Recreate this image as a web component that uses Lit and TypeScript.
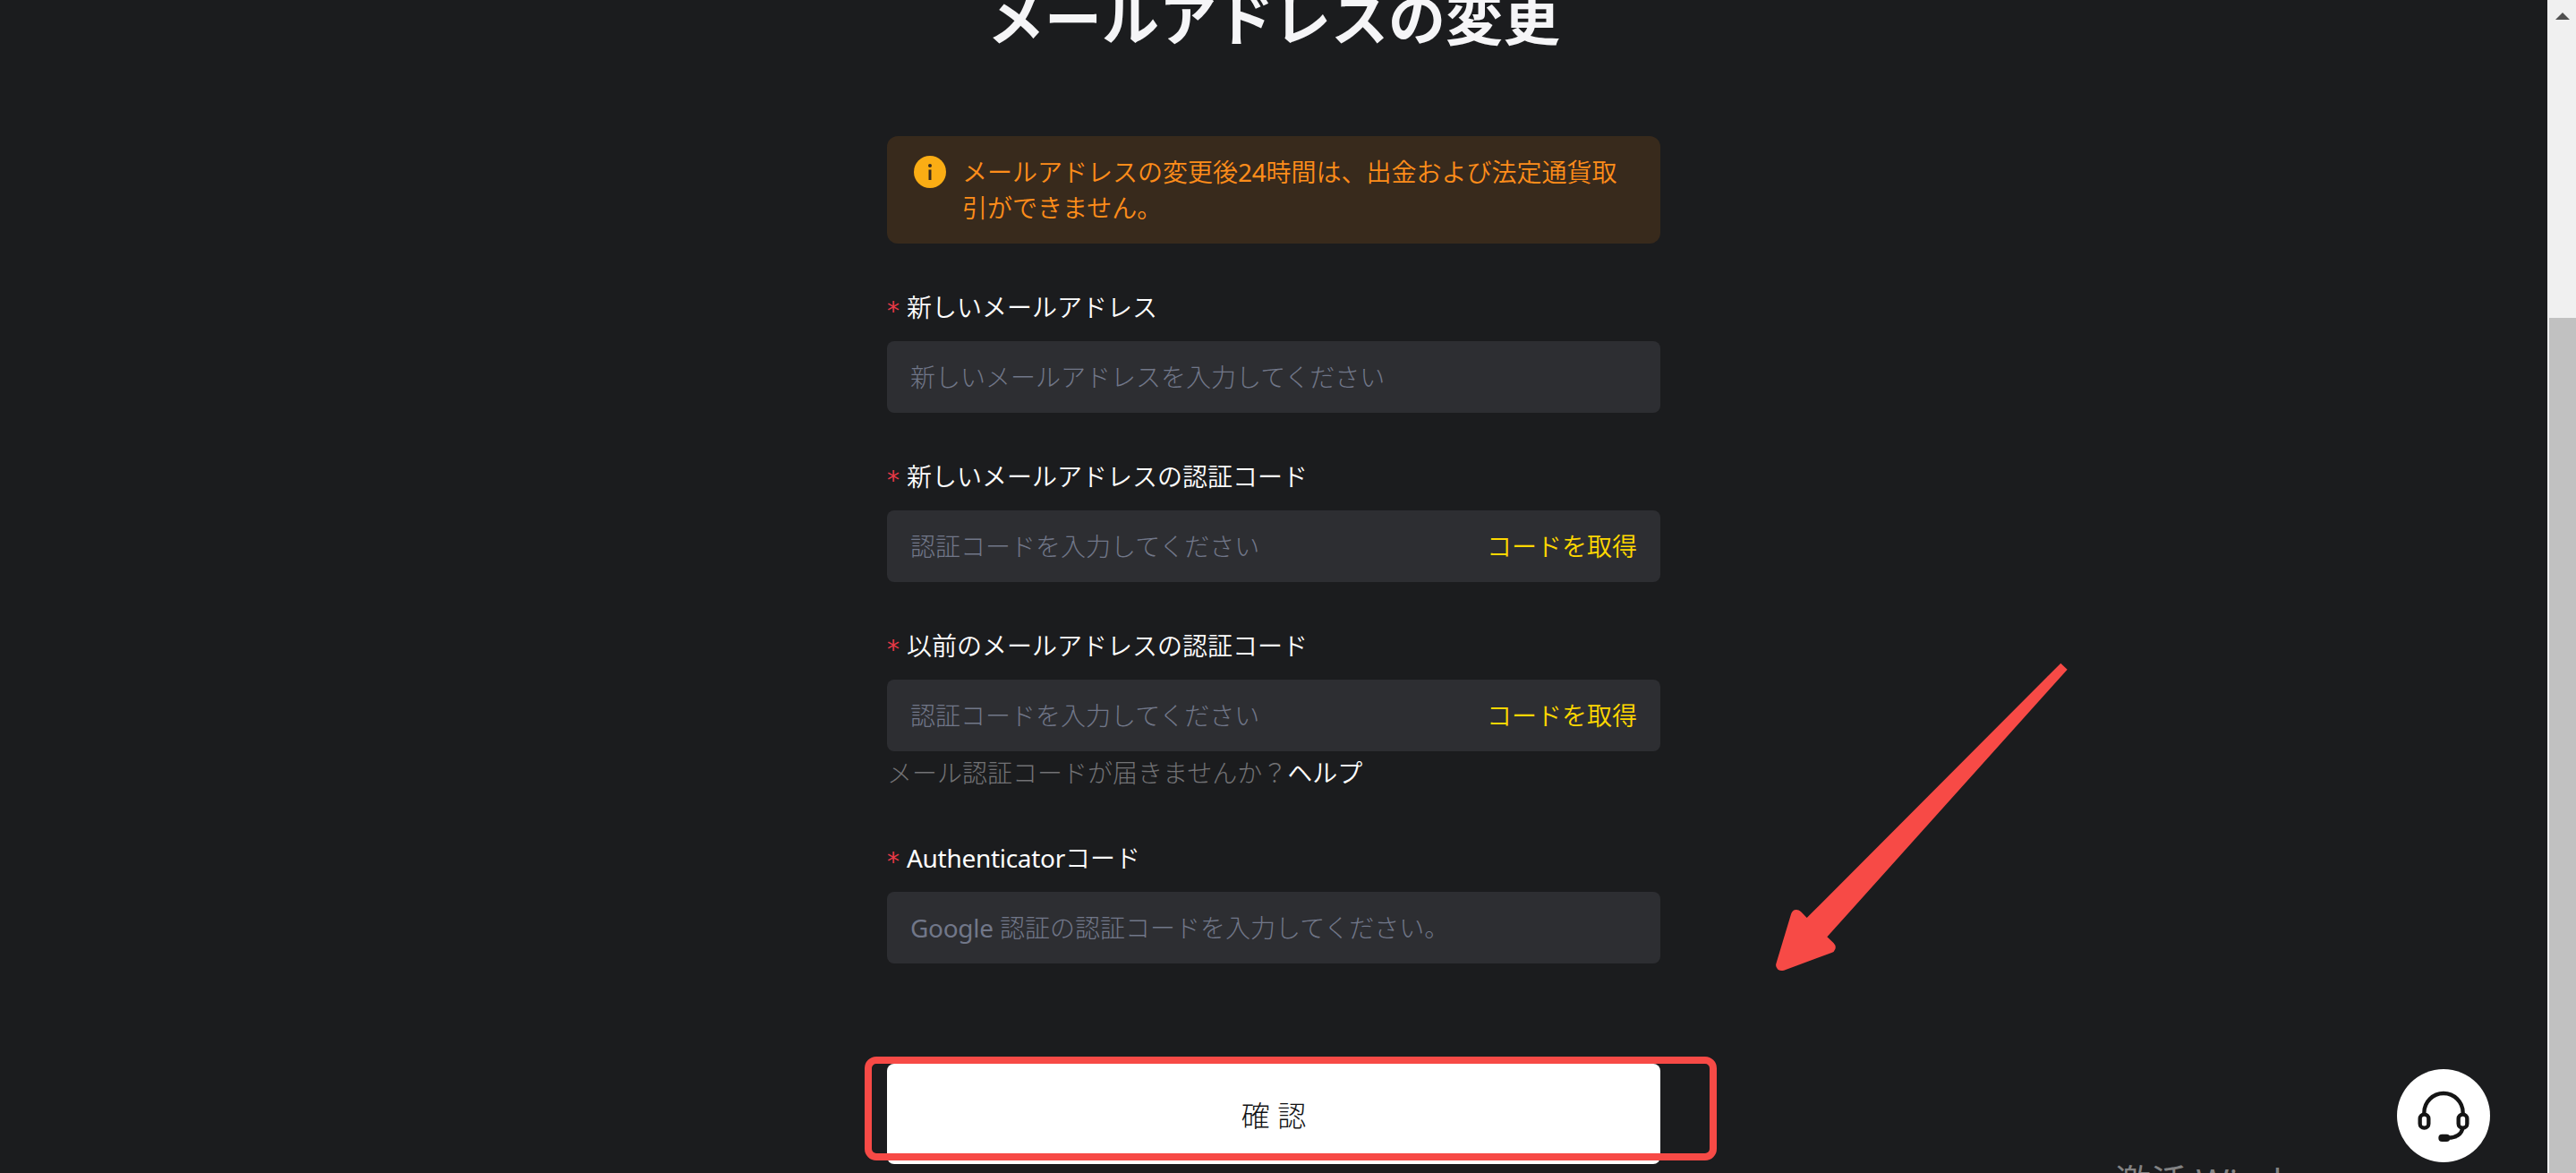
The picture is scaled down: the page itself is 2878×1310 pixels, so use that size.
import { LitElement, css, html, nothing, svg } from 'lit'
import { customElement, property } from 'lit/decorators.js'

const fonts = css`"Noto Sans", "Noto Sans CJK JP", sans-serif`

// latin words and digits are set a bit heavier than the kana around them
const mixed = (text: string) => text
  .split(/([A-Za-z0-9]+)/)
  .map((part, i) => i % 2 ? html`<span class="latin">${part}</span>` : part)

const mixedStyles = css`
  .latin {
    font-weight: 400;
    letter-spacing: -0.3px;
  }
`

@customElement('form-field')
export class FormField extends LitElement {

  @property()
  label = ''
  @property()
  placeholder = ''
  @property()
  action = ''

  render() {
    return html`
      <label class="label"><span class="star">*</span><span>${mixed(this.label)}</span></label>
      <div class="box">
        <div class="input">${mixed(this.placeholder)}</div>
        ${this.action ? html`<button class="action">${this.action}</button>` : nothing}
      </div>
      <slot></slot>
    `
  }

  static styles = [mixedStyles, css`
    :host {
      display: block;
      font-family: ${fonts};
      font-size: 28px;
      font-weight: 300;
    }

    .label {
      display: flex;
      height: 44px;
      margin-bottom: 16px;
      line-height: 44px;
      color: #fff;
      font-weight: 350;
      white-space: nowrap;
    }

    .star {
      width: 22px;
      color: #e63946;
      font-family: "DejaVu Sans", sans-serif;
      font-size: 28px;
      font-weight: 400;
      line-height: 53px;
    }

    .box {
      display: flex;
      align-items: center;
      height: 80px;
      padding: 0 26px;
      box-sizing: border-box;
      border-radius: 8px;
      background: #2d2e32;
    }

    .input {
      flex: 1;
      line-height: 44px;
      color: #717789;
      white-space: nowrap;
    }

    .action {
      padding: 0;
      border: 0;
      background: none;
      color: #ffd800;
      font: inherit;
      font-weight: 350;
      line-height: 44px;
    }
  `]
}

@customElement('app-root')
export class AppRoot extends LitElement {

  render() {
    return html`
      <main class="page">
        <h1 class="title">メールアドレスの変更</h1>
        <div class="form">
          <div class="alert">
            <svg class="info" viewBox="0 0 36 36">
              <circle cx="18" cy="18" r="18" fill="#faad14"/>
              <circle cx="18" cy="11" r="2" fill="#382a1c"/>
              <path d="M18 15.5V27" stroke="#382a1c" stroke-width="3"/>
            </svg>
            <div>${mixed('メールアドレスの変更後24時間は、出金および法定通貨取引ができません。')}</div>
          </div>
          <form-field label="新しいメールアドレス" placeholder="新しいメールアドレスを入力してください"></form-field>
          <form-field label="新しいメールアドレスの認証コード" placeholder="認証コードを入力してください" action="コードを取得"></form-field>
          <form-field label="以前のメールアドレスの認証コード" placeholder="認証コードを入力してください" action="コードを取得">
            <div class="hint">メール認証コードが届きませんか？<a class="help">ヘルプ</a></div>
          </form-field>
          <form-field label="Authenticatorコード" placeholder="Google 認証の認証コードを入力してください。"></form-field>
          <button class="confirm">確 認</button>
        </div>
      </main>
      <div class="scrollbar">
        <svg class="up" viewBox="0 0 16 8"><path d="M0 8L8 0L16 8Z" fill="#505050"/></svg>
        <div class="thumb"></div>
      </div>
      <div class="marker"></div>
      ${this._arrow()}
      <div class="watermark">激活 Windows</div>
      <button class="chat">${this._headset()}</button>
    `
  }

  private _arrow() {
    return html`
      <svg class="arrow" viewBox="0 0 1140 1140">
        <path fill="#f74a46" d="M1027 62L1049 83L244 979L266 1000Q275 1010 271 1020Q268 1029 259 1032L99 1091
          Q88 1094 79 1088Q70 1080 73 1069L123 903Q127 889 139 888Q149 887 158 896L176 915Z"/>
      </svg>
    `
  }

  private _headset() {
    const ear = (x: number) => svg`<rect x=${x} y="152" width="29" height="45" rx="14"/>`
    return html`
      <svg class="headset" viewBox="0 0 312 312" fill="none" stroke="#151515" stroke-width="13">
        <path d="M91 150V146A65 65 0 0 1 221 146V150"/>
        ${ear(77)}${ear(206)}
        <path d="M220 200C214 220 198 230 172 230"/>
        <rect x="139" y="218" width="39" height="25" rx="12" fill="#151515" stroke="none"/>
      </svg>
    `
  }

  static styles = [mixedStyles, css`
    :host {
      position: relative;
      display: flex;
      height: 1310px;
      overflow: hidden;
      background: #1b1c1e;
      font-family: ${fonts};
      font-size: 28px;
      font-weight: 300;
    }

    .page {
      flex: 1;
      display: flex;
      flex-direction: column;
      align-items: center;
    }

    .title {
      height: 96px;
      margin: -27px 0 83px;
      color: #f5f5f7;
      font-size: 64px;
      font-weight: 700;
      line-height: 96px;
    }

    .form {
      display: flex;
      flex-direction: column;
      gap: 49px;
      width: 864px;
    }

    .alert {
      display: flex;
      gap: 18px;
      height: 120px;
      padding: 20px 46px 20px 30px;
      box-sizing: border-box;
      border-radius: 12px;
      background: #382a1c;
      color: #ff8d1a;
      font-weight: 350;
      line-height: 40px;
    }

    .info {
      flex: none;
      width: 36px;
      height: 36px;
      margin-top: 2px;
    }

    .hint {
      height: 48px;
      color: #727275;
      line-height: 48px;
    }

    .help {
      color: #fff;
      font-weight: 350;
    }

    .confirm {
      height: 112px;
      margin-top: 63px;
      padding: 0;
      border: 0;
      border-radius: 8px;
      background: #fff;
      color: #121214;
      font: inherit;
      font-size: 32px;
    }

    .scrollbar {
      display: flex;
      flex-direction: column;
      width: 32px;
      background: #f0f0f0;
    }

    .up {
      width: 16px;
      height: 8px;
      margin: 14px 0 333px 9px;
    }

    .thumb {
      flex: 1;
      margin-left: 2px;
      background: #c1c1c1;
    }

    .marker {
      position: absolute;
      left: 966px;
      top: 1180px;
      width: 952px;
      height: 116px;
      box-sizing: border-box;
      border: 8px solid #f74a46;
      border-radius: 13px;
    }

    .arrow {
      position: absolute;
      left: 1960px;
      top: 720px;
      width: 380px;
      height: 380px;
    }

    .watermark {
      position: absolute;
      left: 2363px;
      top: 1290px;
      color: #838384;
      font-family: "Open Sans", "Noto Sans CJK SC", sans-serif;
      font-size: 40px;
      font-weight: 400;
      line-height: 60px;
      white-space: nowrap;
    }

    .chat {
      position: absolute;
      left: 2678px;
      top: 1194px;
      width: 104px;
      height: 104px;
      padding: 0;
      border: 0;
      border-radius: 50%;
      background: #fff;
    }

    .headset {
      display: block;
      width: 104px;
      height: 104px;
    }
  `]
}

declare global {
  interface HTMLElementTagNameMap {
    'app-root': AppRoot
    'form-field': FormField
  }
}
